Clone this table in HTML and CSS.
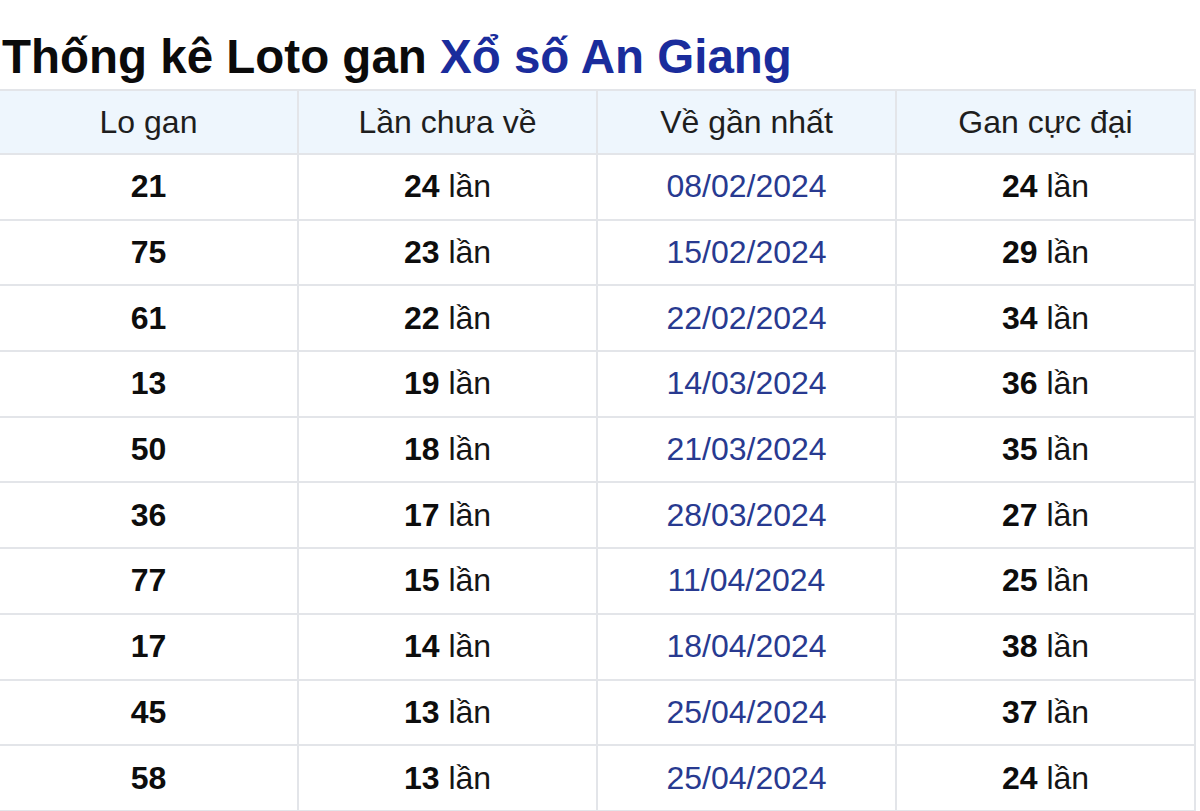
FILE: index.html
```html
<!DOCTYPE html>
<html lang="vi">
<head>
<meta charset="utf-8">
<title>Thống kê Loto gan Xổ số An Giang</title>
<link rel="stylesheet" href="styles.css">
</head>
<body>
<h2 class="title">Thống kê Loto gan <span class="title-accent">Xổ số An Giang</span></h2>
<table class="gan-table">
  <colgroup><col class="c"><col class="c"><col class="c"><col class="c"></colgroup>
  <thead>
    <tr><th>Lo gan</th><th>Lần chưa về</th><th>Về gần nhất</th><th>Gan cực đại</th></tr>
  </thead>
  <tbody>
    <tr><td><b>21</b></td><td><b>24</b> lần</td><td class="date">08/02/2024</td><td><b>24</b> lần</td></tr>
    <tr><td><b>75</b></td><td><b>23</b> lần</td><td class="date">15/02/2024</td><td><b>29</b> lần</td></tr>
    <tr><td><b>61</b></td><td><b>22</b> lần</td><td class="date">22/02/2024</td><td><b>34</b> lần</td></tr>
    <tr><td><b>13</b></td><td><b>19</b> lần</td><td class="date">14/03/2024</td><td><b>36</b> lần</td></tr>
    <tr><td><b>50</b></td><td><b>18</b> lần</td><td class="date">21/03/2024</td><td><b>35</b> lần</td></tr>
    <tr><td><b>36</b></td><td><b>17</b> lần</td><td class="date">28/03/2024</td><td><b>27</b> lần</td></tr>
    <tr><td><b>77</b></td><td><b>15</b> lần</td><td class="date">11/04/2024</td><td><b>25</b> lần</td></tr>
    <tr><td><b>17</b></td><td><b>14</b> lần</td><td class="date">18/04/2024</td><td><b>38</b> lần</td></tr>
    <tr><td><b>45</b></td><td><b>13</b> lần</td><td class="date">25/04/2024</td><td><b>37</b> lần</td></tr>
    <tr><td><b>58</b></td><td><b>13</b> lần</td><td class="date">25/04/2024</td><td><b>24</b> lần</td></tr>
  </tbody>
</table>
</body>
</html>
```
FILE: styles.css
```css
html, body {
  margin: 0;
  padding: 0;
  background: #ffffff;
}
body {
  font-family: "Liberation Sans", Arial, sans-serif;
  color: #111111;
}
.title {
  margin: 30px 0 6px 2px;
  font-size: 47.5px;
  line-height: 53px;
  font-weight: bold;
  color: #0b0b0b;
}
.title-accent {
  color: #1a2c9c;
}
.gan-table {
  border-collapse: collapse;
  table-layout: fixed;
  width: 1198px;
  margin-left: -2px;
}
.gan-table .c {
  width: 25%;
}
.gan-table th,
.gan-table td {
  border: 2px solid #e3e5e9;
  text-align: center;
  vertical-align: middle;
  font-size: 32px;
  padding: 0;
}
.gan-table th {
  height: 62px;
  background: #eef6fd;
  font-weight: normal;
  color: #1e1e1e;
}
.gan-table td {
  height: 63.7px;
  color: #151515;
}
.gan-table td b {
  font-weight: bold;
  color: #0d0d0d;
}
.gan-table td.date {
  color: #283a90;
}
```
